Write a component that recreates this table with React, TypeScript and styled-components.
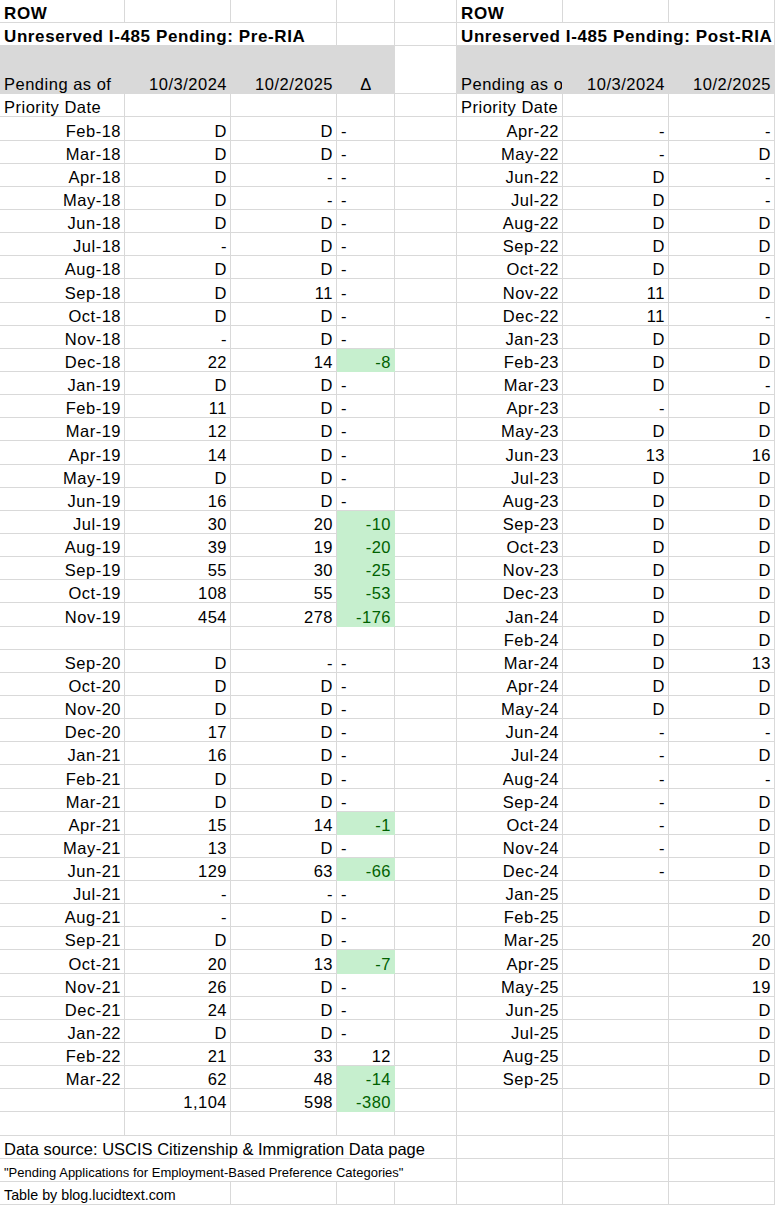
import React from 'react';
import styled, { createGlobalStyle, css } from 'styled-components';

type Align = 'left' | 'right' | 'center';
type Fill = 'gray' | 'green';

const colors = {
  grid: '#d9d9d9',
  gray: '#d9d9d9',
  green: '#c6efce',
  greenText: '#006100',
  text: '#000000',
};

const GlobalStyle = createGlobalStyle`
  html, body {
    margin: 0;
    padding: 0;
    background: #ffffff;
  }
  body {
    font-family: 'Liberation Sans', Arial, sans-serif;
    color: ${colors.text};
  }
`;

const Sheet = styled.div`
  display: grid;
  grid-template-columns: 125px 106px 106px 58px 62px 106px 106px 106px;
  grid-template-rows: 23.15px 23.15px 48px;
  grid-auto-rows: 23.15px;
  width: 775px;
`;

const justify = { left: 'flex-start', right: 'flex-end', center: 'center' };

const Cell = styled.div<{ $align?: Align; $fill?: Fill; $span?: number }>`
  grid-column: span ${(p) => p.$span ?? 1};
  display: flex;
  align-items: flex-end;
  justify-content: ${(p) => justify[p.$align ?? 'left']};
  min-width: 0;
  padding: 0 3px 0 4px;
  box-sizing: border-box;
  overflow: hidden;
  white-space: nowrap;
  font-size: 16.5px;
  line-height: 17px;
  letter-spacing: 0.5px;
  border-right: 1px solid ${colors.grid};
  border-bottom: 1px solid ${colors.grid};

  ${(p) =>
    p.$fill === 'gray' &&
    css`
      background: ${colors.gray};
      border-color: ${colors.gray};
    `}
  ${(p) =>
    p.$fill === 'green' &&
    css`
      background: ${colors.green};
      border-color: ${colors.green};
      color: ${colors.greenText};
    `}
`;

const Title = styled(Cell)`
  font-weight: 700;
  font-size: 17px;
  letter-spacing: 0.6px;
`;

const Note = styled(Cell)<{ $size: number }>`
  font-size: ${(p) => p.$size}px;
  letter-spacing: 0;
`;

const left: string[][] = [
  ['Feb-18', 'D', 'D', '-'],
  ['Mar-18', 'D', 'D', '-'],
  ['Apr-18', 'D', '-', '-'],
  ['May-18', 'D', '-', '-'],
  ['Jun-18', 'D', 'D', '-'],
  ['Jul-18', '-', 'D', '-'],
  ['Aug-18', 'D', 'D', '-'],
  ['Sep-18', 'D', '11', '-'],
  ['Oct-18', 'D', 'D', '-'],
  ['Nov-18', '-', 'D', '-'],
  ['Dec-18', '22', '14', '-8'],
  ['Jan-19', 'D', 'D', '-'],
  ['Feb-19', '11', 'D', '-'],
  ['Mar-19', '12', 'D', '-'],
  ['Apr-19', '14', 'D', '-'],
  ['May-19', 'D', 'D', '-'],
  ['Jun-19', '16', 'D', '-'],
  ['Jul-19', '30', '20', '-10'],
  ['Aug-19', '39', '19', '-20'],
  ['Sep-19', '55', '30', '-25'],
  ['Oct-19', '108', '55', '-53'],
  ['Nov-19', '454', '278', '-176'],
  ['', '', '', ''],
  ['Sep-20', 'D', '-', '-'],
  ['Oct-20', 'D', 'D', '-'],
  ['Nov-20', 'D', 'D', '-'],
  ['Dec-20', '17', 'D', '-'],
  ['Jan-21', '16', 'D', '-'],
  ['Feb-21', 'D', 'D', '-'],
  ['Mar-21', 'D', 'D', '-'],
  ['Apr-21', '15', '14', '-1'],
  ['May-21', '13', 'D', '-'],
  ['Jun-21', '129', '63', '-66'],
  ['Jul-21', '-', '-', '-'],
  ['Aug-21', '-', 'D', '-'],
  ['Sep-21', 'D', 'D', '-'],
  ['Oct-21', '20', '13', '-7'],
  ['Nov-21', '26', 'D', '-'],
  ['Dec-21', '24', 'D', '-'],
  ['Jan-22', 'D', 'D', '-'],
  ['Feb-22', '21', '33', '12'],
  ['Mar-22', '62', '48', '-14'],
];

const right: string[][] = [
  ['Apr-22', '-', '-'],
  ['May-22', '-', 'D'],
  ['Jun-22', 'D', '-'],
  ['Jul-22', 'D', '-'],
  ['Aug-22', 'D', 'D'],
  ['Sep-22', 'D', 'D'],
  ['Oct-22', 'D', 'D'],
  ['Nov-22', '11', 'D'],
  ['Dec-22', '11', '-'],
  ['Jan-23', 'D', 'D'],
  ['Feb-23', 'D', 'D'],
  ['Mar-23', 'D', '-'],
  ['Apr-23', '-', 'D'],
  ['May-23', 'D', 'D'],
  ['Jun-23', '13', '16'],
  ['Jul-23', 'D', 'D'],
  ['Aug-23', 'D', 'D'],
  ['Sep-23', 'D', 'D'],
  ['Oct-23', 'D', 'D'],
  ['Nov-23', 'D', 'D'],
  ['Dec-23', 'D', 'D'],
  ['Jan-24', 'D', 'D'],
  ['Feb-24', 'D', 'D'],
  ['Mar-24', 'D', '13'],
  ['Apr-24', 'D', 'D'],
  ['May-24', 'D', 'D'],
  ['Jun-24', '-', '-'],
  ['Jul-24', '-', 'D'],
  ['Aug-24', '-', '-'],
  ['Sep-24', '-', 'D'],
  ['Oct-24', '-', 'D'],
  ['Nov-24', '-', 'D'],
  ['Dec-24', '-', 'D'],
  ['Jan-25', '', 'D'],
  ['Feb-25', '', 'D'],
  ['Mar-25', '', '20'],
  ['Apr-25', '', 'D'],
  ['May-25', '', '19'],
  ['Jun-25', '', 'D'],
  ['Jul-25', '', 'D'],
  ['Aug-25', '', 'D'],
  ['Sep-25', '', 'D'],
];

const DeltaCell = ({ value }: { value: string }) => {
  if (value === '-') return <Cell $align="left">-</Cell>;
  if (value.startsWith('-'))
    return (
      <Cell $align="right" $fill="green">
        {value}
      </Cell>
    );
  return <Cell $align="right">{value}</Cell>;
};

const Blanks = ({ count }: { count: number }) => (
  <>
    {Array.from({ length: count }, (_, i) => (
      <Cell key={i} />
    ))}
  </>
);

const App = () => {
  return (
    <>
      <GlobalStyle />
      <Sheet>
        {/* titles */}
        <Title>ROW</Title>
        <Blanks count={4} />
        <Title>ROW</Title>
        <Blanks count={2} />

        <Title $span={3}>Unreserved I-485 Pending: Pre-RIA</Title>
        <Blanks count={2} />
        <Title $span={3}>Unreserved I-485 Pending: Post-RIA</Title>

        {/* column headers */}
        <Cell $fill="gray">Pending as of</Cell>
        <Cell $fill="gray" $align="right">10/3/2024</Cell>
        <Cell $fill="gray" $align="right">10/2/2025</Cell>
        <Cell $fill="gray" $align="center">Δ</Cell>
        <Cell />
        <Cell $fill="gray">Pending as of</Cell>
        <Cell $fill="gray" $align="right">10/3/2024</Cell>
        <Cell $fill="gray" $align="right">10/2/2025</Cell>

        <Cell>Priority Date</Cell>
        <Blanks count={4} />
        <Cell>Priority Date</Cell>
        <Blanks count={2} />

        {left.map((row, i) => (
          <React.Fragment key={i}>
            <Cell $align="right">{row[0]}</Cell>
            <Cell $align="right">{row[1]}</Cell>
            <Cell $align="right">{row[2]}</Cell>
            {row[3] ? <DeltaCell value={row[3]} /> : <Cell />}
            <Cell />
            <Cell $align="right">{right[i][0]}</Cell>
            <Cell $align="right">{right[i][1]}</Cell>
            <Cell $align="right">{right[i][2]}</Cell>
          </React.Fragment>
        ))}

        {/* totals */}
        <Cell />
        <Cell $align="right">1,104</Cell>
        <Cell $align="right">598</Cell>
        <DeltaCell value="-380" />
        <Blanks count={4} />

        <Blanks count={8} />

        {/* footer notes */}
        <Note $size={16.5} $span={5}>
          Data source: USCIS Citizenship &amp; Immigration Data page
        </Note>
        <Blanks count={3} />
        <Note $size={13} $span={5}>
          "Pending Applications for Employment-Based Preference Categories"
        </Note>
        <Blanks count={3} />
        <Note $size={14.3} $span={2}>
          Table by blog.lucidtext.com
        </Note>
        <Blanks count={6} />
      </Sheet>
    </>
  );
};

export default App;
